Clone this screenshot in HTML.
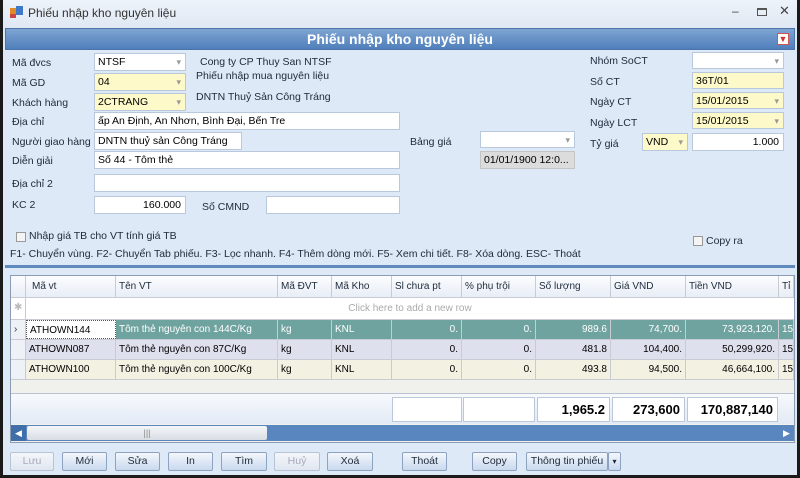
<!DOCTYPE html>
<html><head><meta charset="utf-8"><style>
*{box-sizing:border-box;margin:0;padding:0}
body{width:800px;height:478px;overflow:hidden;background:#1a1a1a;font-family:"Liberation Sans","DejaVu Sans",sans-serif;font-size:10px;color:#1e2a3a;position:relative}
.a{position:absolute}
.win{left:3px;top:0;width:794px;height:475px;background:#dde9f6}
.tb{left:3px;top:0;width:794px;height:28px;background:linear-gradient(#eef3fa,#dfe8f3);}
.hd{left:5px;top:28px;width:790px;height:22px;background:linear-gradient(#7ea4d2,#4f7fbb);color:#fff;font-weight:bold;font-size:14px;text-align:center;line-height:21px;border:1px solid #4a74aa}
.lb{position:absolute;font-size:10.5px;color:#1e2a3a;white-space:nowrap}
.in{position:absolute;background:#fff;border:1px solid #b9c8da;height:18px;font-size:10.5px;line-height:16px;padding-left:3px;color:#000;white-space:nowrap;overflow:hidden}
.y{background:#fdf9c8}
.dd:after{content:"▾";position:absolute;right:4px;top:0;color:#999;font-size:9px}
.r{text-align:right;padding-right:4px}
.grid{left:10px;top:275px;width:785px;height:168px;background:#f0f0ec;border:1px solid #8a9bb3}
.row{position:absolute;left:0;width:783px;height:20px;border-bottom:1px solid #c8cbd2;font-size:10px}
.c{position:absolute;top:0;height:100%;border-right:1px solid #c8cbd2;line-height:19px;padding:0 3px;white-space:nowrap;overflow:hidden}
.btn{position:absolute;top:452px;height:19px;border:1px solid #8ea3c0;border-radius:2px;background:linear-gradient(#f3f7fc,#c9d9ee);text-align:center;line-height:17px;font-size:10.5px;color:#1e2a3a}
.dis{color:#aab;border-color:#b8c4d4;background:linear-gradient(#f3f6fa,#e0e7f0)}
</style></head><body>
<div class="a win"></div>
<div class="a tb"></div>
<div class="a" style="left:10px;top:8px;width:6px;height:6px;background:#e08a2a"></div>
<div class="a" style="left:16px;top:6px;width:7px;height:9px;background:#3f78c8"></div>
<div class="a" style="left:10px;top:14px;width:6px;height:4px;background:#c44"></div>
<div class="a" style="left:28px;top:6px;font-size:12px;color:#333">Phiếu nhập kho nguyên liệu</div>
<div class="a" style="left:732px;top:4px;font-size:12px;color:#444">–</div>
<div class="a" style="left:757px;top:8px;width:10px;height:8px;border:1px solid #555;border-top-width:2px"></div>
<div class="a" style="left:779px;top:3px;font-size:13px;color:#444">✕</div>
<div class="a hd">Phiếu nhập kho nguyên liệu</div>
<div class="a" style="left:777px;top:33px;width:12px;height:12px;background:#fff;border:1px solid #c55;color:#c33;font-size:9px;line-height:11px;text-align:center">▼</div>

<div class="lb" style="left:12px;top:57px">Mã đvcs</div>
<div class="in dd" style="left:94px;top:53px;width:92px">NTSF</div>
<div class="lb" style="left:12px;top:77px">Mã GD</div>
<div class="in y dd" style="left:94px;top:73px;width:92px">04</div>
<div class="lb" style="left:12px;top:97px">Khách hàng</div>
<div class="in y dd" style="left:94px;top:93px;width:92px">2CTRANG</div>
<div class="lb" style="left:200px;top:56px">Cong ty CP Thuy San NTSF</div>
<div class="lb" style="left:196px;top:70px">Phiếu nhập mua nguyên liệu</div>
<div class="lb" style="left:196px;top:91px">DNTN Thuỷ Sản Công Tráng</div>
<div class="lb" style="left:12px;top:116px">Địa chỉ</div>
<div class="in" style="left:94px;top:112px;width:306px">ấp An Định, An Nhơn, Bình Đại, Bến Tre</div>
<div class="lb" style="left:12px;top:136px">Người giao hàng</div>
<div class="in" style="left:94px;top:132px;width:148px">DNTN thuỷ sản Công Tráng</div>
<div class="lb" style="left:12px;top:155px">Diễn giải</div>
<div class="in" style="left:94px;top:151px;width:306px">Số 44 - Tôm thẻ</div>
<div class="lb" style="left:12px;top:178px">Địa chỉ 2</div>
<div class="in" style="left:94px;top:174px;width:306px"></div>
<div class="lb" style="left:12px;top:199px">KC 2</div>
<div class="in r" style="left:94px;top:196px;width:92px">160.000</div>
<div class="lb" style="left:202px;top:201px">Số CMND</div>
<div class="in" style="left:266px;top:196px;width:134px"></div>
<div class="a" style="left:16px;top:232px;width:10px;height:10px;border:1px solid #999;background:#f4f4f4"></div>
<div class="lb" style="left:29px;top:230px">Nhập giá TB cho VT tính giá TB</div>
<div class="lb" style="left:10px;top:248px">F1- Chuyển vùng. F2- Chuyển Tab phiếu. F3- Lọc nhanh. F4- Thêm dòng mới. F5- Xem chi tiết. F8- Xóa dòng. ESC- Thoát</div>
<div class="a" style="left:693px;top:236px;width:10px;height:10px;border:1px solid #999;background:#f4f4f4"></div>
<div class="lb" style="left:706px;top:235px">Copy ra</div>

<div class="lb" style="left:410px;top:136px">Bảng giá</div>
<div class="in dd" style="left:480px;top:131px;width:95px;height:17px"></div>
<div class="in" style="left:480px;top:151px;width:95px;background:#dcdcdc;border-color:#c4c4c4">01/01/1900 12:0...</div>
<div class="lb" style="left:590px;top:55px">Nhóm SoCT</div>
<div class="in dd" style="left:692px;top:52px;width:92px;height:17px"></div>
<div class="lb" style="left:590px;top:76px">Số CT</div>
<div class="in y" style="left:692px;top:72px;width:92px;height:17px">36T/01</div>
<div class="lb" style="left:590px;top:96px">Ngày CT</div>
<div class="in y dd" style="left:692px;top:92px;width:92px;height:17px">15/01/2015</div>
<div class="lb" style="left:590px;top:117px">Ngày LCT</div>
<div class="in y dd" style="left:692px;top:112px;width:92px;height:17px">15/01/2015</div>
<div class="lb" style="left:590px;top:138px">Tỷ giá</div>
<div class="in y dd" style="left:642px;top:133px;width:46px;height:18px">VND</div>
<div class="in r" style="left:692px;top:133px;width:92px;height:18px">1.000</div>

<div class="a" style="left:5px;top:265px;width:790px;height:3px;background:#5f88bd"></div>

<div class="a grid">
 <div class="row" style="top:0;height:22px;background:linear-gradient(#fbfcfe,#e8eef6)">
  <div class="c" style="left:0;width:15px"></div>
  <div class="c" style="left:15px;width:90px;padding-left:6px;line-height:21px">Mã vt</div>
  <div class="c" style="left:105px;width:162px;line-height:21px">Tên VT</div>
  <div class="c" style="left:267px;width:54px;line-height:21px">Mã ĐVT</div>
  <div class="c" style="left:321px;width:60px;line-height:21px">Mã Kho</div>
  <div class="c" style="left:381px;width:70px;line-height:21px">Sl chưa pt</div>
  <div class="c" style="left:451px;width:74px;line-height:21px">% phụ trội</div>
  <div class="c" style="left:525px;width:75px;line-height:21px">Số lượng</div>
  <div class="c" style="left:600px;width:75px;line-height:21px">Giá VND</div>
  <div class="c" style="left:675px;width:93px;line-height:21px">Tiền VND</div>
  <div class="c" style="left:768px;width:15px;line-height:21px">Tỉ</div>
 </div>
 <div class="row" style="top:22px;height:22px;background:#fff">
  <div class="c" style="left:0;width:15px;color:#bbb;text-align:center">✱</div>
  <div class="a" style="left:15px;width:768px;text-align:center;line-height:21px;color:#aaa">Click here to add a new row</div>
 </div>
 <div class="row" style="top:44px;background:#6fa39f;color:#fff">
  <div class="c" style="left:0;width:15px;background:#eef1f6;color:#333">›</div>
  <div class="c" style="left:15px;width:90px;background:#fff;color:#000;border:1px dotted #555">ATHOWN144</div>
  <div class="c" style="left:105px;width:162px">Tôm thẻ nguyên con 144C/Kg</div>
  <div class="c" style="left:267px;width:54px">kg</div>
  <div class="c" style="left:321px;width:60px">KNL</div>
  <div class="c r" style="left:381px;width:70px">0.</div>
  <div class="c r" style="left:451px;width:74px">0.</div>
  <div class="c r" style="left:525px;width:75px">989.6</div>
  <div class="c r" style="left:600px;width:75px">74,700.</div>
  <div class="c r" style="left:675px;width:93px">73,923,120.</div>
  <div class="c" style="left:768px;width:15px">15</div>
 </div>
 <div class="row" style="top:64px;background:#dfe0ee;color:#000">
  <div class="c" style="left:0;width:15px;background:#eef1f6"></div>
  <div class="c" style="left:15px;width:90px">ATHOWN087</div>
  <div class="c" style="left:105px;width:162px">Tôm thẻ nguyên con 87C/Kg</div>
  <div class="c" style="left:267px;width:54px">kg</div>
  <div class="c" style="left:321px;width:60px">KNL</div>
  <div class="c r" style="left:381px;width:70px">0.</div>
  <div class="c r" style="left:451px;width:74px">0.</div>
  <div class="c r" style="left:525px;width:75px">481.8</div>
  <div class="c r" style="left:600px;width:75px">104,400.</div>
  <div class="c r" style="left:675px;width:93px">50,299,920.</div>
  <div class="c" style="left:768px;width:15px">15</div>
 </div>
 <div class="row" style="top:84px;background:#f3f1e2;color:#000">
  <div class="c" style="left:0;width:15px;background:#eef1f6"></div>
  <div class="c" style="left:15px;width:90px">ATHOWN100</div>
  <div class="c" style="left:105px;width:162px">Tôm thẻ nguyên con 100C/Kg</div>
  <div class="c" style="left:267px;width:54px">kg</div>
  <div class="c" style="left:321px;width:60px">KNL</div>
  <div class="c r" style="left:381px;width:70px">0.</div>
  <div class="c r" style="left:451px;width:74px">0.</div>
  <div class="c r" style="left:525px;width:75px">493.8</div>
  <div class="c r" style="left:600px;width:75px">94,500.</div>
  <div class="c r" style="left:675px;width:93px">46,664,100.</div>
  <div class="c" style="left:768px;width:15px">15</div>
 </div>
 <div class="a" style="left:0;top:117px;width:783px;height:31px;background:linear-gradient(#f7f9fc,#e2eaf5);border-top:1px solid #b8c4d4"></div>
 <div class="in" style="left:381px;top:121px;width:70px;height:25px"></div>
 <div class="in" style="left:452px;top:121px;width:72px;height:25px"></div>
 <div class="in r" style="left:526px;top:121px;width:73px;height:25px;font-weight:bold;font-size:13px;line-height:23px">1,965.2</div>
 <div class="in r" style="left:601px;top:121px;width:73px;height:25px;font-weight:bold;font-size:13px;line-height:23px">273,600</div>
 <div class="in r" style="left:676px;top:121px;width:91px;height:25px;font-weight:bold;font-size:13px;line-height:23px">170,887,140</div>
 <div class="a" style="left:0;top:149px;width:783px;height:16px;background:#5a86bf"></div>
 <div class="a" style="left:0;top:149px;width:15px;height:16px;background:#3f6ea8;color:#fff;font-size:9px;line-height:16px;text-align:center">◀</div>
 <div class="a" style="left:16px;top:150px;width:240px;height:14px;background:linear-gradient(#f4f6f9,#d8dde4);border-radius:2px;text-align:center;color:#888;font-size:9px;line-height:14px">|||</div>
 <div class="a" style="left:768px;top:149px;width:15px;height:16px;color:#fff;font-size:9px;line-height:16px;text-align:center">▶</div>
</div>

<div class="btn dis" style="left:10px;width:44px">Lưu</div>
<div class="btn" style="left:62px;width:45px">Mới</div>
<div class="btn" style="left:115px;width:45px">Sửa</div>
<div class="btn" style="left:168px;width:45px">In</div>
<div class="btn" style="left:221px;width:46px">Tìm</div>
<div class="btn dis" style="left:274px;width:46px">Huỷ</div>
<div class="btn" style="left:327px;width:46px">Xoá</div>
<div class="btn" style="left:402px;width:45px">Thoát</div>
<div class="btn" style="left:472px;width:45px">Copy</div>
<div class="btn" style="left:526px;width:82px">Thông tin phiếu</div>
<div class="btn" style="left:608px;width:13px;font-size:8px">▾</div>
</body></html>
